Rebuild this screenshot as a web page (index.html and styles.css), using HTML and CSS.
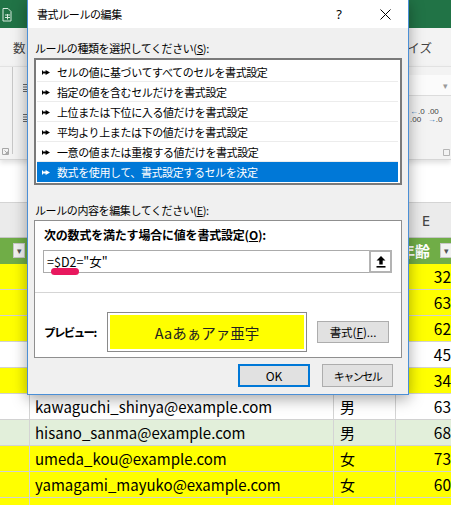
FILE: index.html
```html
<!DOCTYPE html>
<html lang="ja">
<head>
<meta charset="utf-8">
<title>書式ルールの編集</title>
<link rel="stylesheet" href="styles.css">
</head>
<body>
<div class="excel">
  <div class="appbar">
    <svg class="qa-icon" width="10" height="15" viewBox="0 0 10 15">
      <path d="M1 1.5h5l3 3v9.5H1z" fill="none" stroke="#d7eadd" stroke-width="1"/>
      <path d="M3 8h5M3 10.5h5M5.5 7v5.5" stroke="#d7eadd" stroke-width="1"/>
    </svg>
  </div>
  <div class="tabs"><span>数</span><span>サイズ</span></div>
  <div class="ribbon">
    <div class="rb-left">
      <div class="rb-launch-col">
        <svg width="7" height="7" viewBox="0 0 7 7"><path d="M0.5 0.5h6v6h-6z" fill="none" stroke="#a6a6a6"/><path d="M2.5 2.5l3 3M5.5 3.5v2h-2" fill="none" stroke="#a6a6a6"/></svg>
      </div>
      <div class="rb-sep"></div>
      <div class="rb-align">
        <svg width="6" height="8" viewBox="0 0 6 8"><path d="M0 0.5h6M0 3h6M0 5.5h6M0 7.5h6" stroke="#6a6a6a"/></svg>
        <svg width="6" height="8" viewBox="0 0 6 8"><path d="M0 0.5h6M0 3h6M0 5.5h6M0 7.5h6" stroke="#6a6a6a"/></svg>
      </div>
    </div>
    <div class="rb-right">
      <div class="rb-combo"><span class="rb-caret">▾</span></div>
      <div class="rb-dec">
        <div class="dec"><span><b class="arr">←</b>.0</span><span>.00</span></div>
        <div class="dec"><span>.00</span><span><b class="arr">→</b>.0</span></div>
      </div>
      <div class="rb-launch2">
        <svg width="7" height="7" viewBox="0 0 7 7"><path d="M0.5 0.5h6v6h-6z" fill="none" stroke="#b5b5b5"/></svg>
      </div>
    </div>
  </div>
  <div class="formulabar"></div>
  <div class="colhead">
    <div class="ch"></div><div class="ch"></div><div class="ch"></div><div class="ch">E</div>
  </div>
  <div class="sheet">
    <div class="row head">
      <div class="c c1"><span class="dd">▾</span></div>
      <div class="c c2"></div>
      <div class="c c3"></div>
      <div class="c c4"><span>年齢</span><span class="dd">▾</span></div>
    </div>
    <div class="row yel"><div class="c c1"></div><div class="c c2"></div><div class="c c3"></div><div class="c c4">32</div></div>
    <div class="row yel"><div class="c c1"></div><div class="c c2"></div><div class="c c3"></div><div class="c c4">63</div></div>
    <div class="row yel"><div class="c c1"></div><div class="c c2"></div><div class="c c3"></div><div class="c c4">62</div></div>
    <div class="row wht"><div class="c c1"></div><div class="c c2"></div><div class="c c3"></div><div class="c c4">45</div></div>
    <div class="row yel"><div class="c c1"></div><div class="c c2"></div><div class="c c3"></div><div class="c c4">34</div></div>
    <div class="row wht"><div class="c c1"></div><div class="c c2">kawaguchi_shinya@example.com</div><div class="c c3">男</div><div class="c c4">63</div></div>
    <div class="row grn"><div class="c c1"></div><div class="c c2">hisano_sanma@example.com</div><div class="c c3">男</div><div class="c c4">68</div></div>
    <div class="row yel"><div class="c c1"></div><div class="c c2">umeda_kou@example.com</div><div class="c c3">女</div><div class="c c4">73</div></div>
    <div class="row yel"><div class="c c1"></div><div class="c c2">yamagami_mayuko@example.com</div><div class="c c3">女</div><div class="c c4">60</div></div>
    <div class="row yel"><div class="c c1"></div><div class="c c2"></div><div class="c c3"></div><div class="c c4"></div></div>
  </div>
</div>

<div class="dialog">
  <div class="dlg-title">
    <span class="dlg-caption">書式ルールの編集</span>
    <span class="dlg-help">?</span>
    <span class="dlg-close"><svg width="11" height="11" viewBox="0 0 11 11"><path d="M0.5 0.5l10 10M10.5 0.5l-10 10" stroke="#000" stroke-width="1"/></svg></span>
  </div>
  <div class="dlg-body">
    <div class="lbl">ルールの種類を選択してください(<u>S</u>):</div>
    <ul class="rules">
      <li><svg class="mk" viewBox="0 0 8 5"><path d="M0 0.5h1v4H0z M0 1.6h4.5v1.8H0z M3.6 0L8 2.5L3.6 5z" fill="currentColor"/></svg>セルの値に基づいてすべてのセルを書式設定</li>
      <li><svg class="mk" viewBox="0 0 8 5"><path d="M0 0.5h1v4H0z M0 1.6h4.5v1.8H0z M3.6 0L8 2.5L3.6 5z" fill="currentColor"/></svg>指定の値を含むセルだけを書式設定</li>
      <li><svg class="mk" viewBox="0 0 8 5"><path d="M0 0.5h1v4H0z M0 1.6h4.5v1.8H0z M3.6 0L8 2.5L3.6 5z" fill="currentColor"/></svg>上位または下位に入る値だけを書式設定</li>
      <li><svg class="mk" viewBox="0 0 8 5"><path d="M0 0.5h1v4H0z M0 1.6h4.5v1.8H0z M3.6 0L8 2.5L3.6 5z" fill="currentColor"/></svg>平均より上または下の値だけを書式設定</li>
      <li><svg class="mk" viewBox="0 0 8 5"><path d="M0 0.5h1v4H0z M0 1.6h4.5v1.8H0z M3.6 0L8 2.5L3.6 5z" fill="currentColor"/></svg>一意の値または重複する値だけを書式設定</li>
      <li class="sel"><svg class="mk" viewBox="0 0 8 5"><path d="M0 0.5h1v4H0z M0 1.6h4.5v1.8H0z M3.6 0L8 2.5L3.6 5z" fill="currentColor"/></svg>数式を使用して、書式設定するセルを決定</li>
    </ul>
    <div class="lbl lbl2">ルールの内容を編集してください(<u>E</u>):</div>
    <div class="rulebox">
      <div class="rbx-top">
        <div class="blbl">次の数式を満たす場合に値を書式設定(<u>O</u>):</div>
        <div class="fx">
          <span class="fx-text">=$D2="女"</span>
          <span class="fx-mark"></span>
          <span class="fx-btn"><svg width="10" height="12" viewBox="0 0 10 12"><path d="M5 0L9.5 4.6H6.7V8.5H3.3V4.6H0.5z" fill="#000"/><path d="M0.5 10h9v1.6h-9z" fill="#000"/></svg></span>
        </div>
      </div>
      <div class="rbx-bottom">
        <span class="pv-lbl">プレビュー:</span>
        <div class="pv-box"><div class="pv-inner">Aaあぁアァ亜宇</div></div>
        <button class="btn fmt">書式(<u>F</u>)...</button>
      </div>
    </div>
    <div class="actions">
      <button class="btn ok">OK</button>
      <button class="btn cancel">キャンセル</button>
    </div>
  </div>
</div>
</body>
</html>
```

FILE: styles.css
```css
* { box-sizing: border-box; }
html, body { margin: 0; padding: 0; }
body {
  width: 451px;
  height: 505px;
  overflow: hidden;
  position: relative;
  background: #fff;
  color: #000;
  font-family: "Noto Sans CJK JP", "Noto Sans", sans-serif;
}

/* ---------- Excel background ---------- */
.appbar { height: 28px; background: #217346; padding: 7px 0 0 2px; }
.qa-icon { display: block; }

.tabs {
  height: 38px;
  background: #f3f3f3;
  display: flex;
  justify-content: space-between;
  align-items: center;
  padding: 0 19px 0 13px;
  font-size: 12.5px;
  color: #444;
}

.ribbon {
  height: 94px;
  background: #f3f3f3;
  border-top: 1px solid #e2e2e2;
  border-bottom: 1px solid #d6d6d6;
  display: flex;
  justify-content: space-between;
  box-shadow: 0 3px 5px rgba(0, 0, 0, 0.12);
  position: relative;
  z-index: 1;
}
.rb-left { width: 30px; display: flex; }
.rb-launch-col { width: 12px; display: flex; align-items: flex-end; padding: 0 0 4px 2px; }
.rb-launch-col svg { display: block; }
.rb-sep { width: 1px; background: #c8c8c8; margin-bottom: 5px; }
.rb-align { display: flex; flex-direction: column; gap: 22px; padding: 17px 0 0 10px; }
.rb-align svg { display: block; }

.rb-right { width: 46px; display: flex; flex-direction: column; padding-top: 8px; }
.rb-combo {
  height: 21px;
  background: #fbfbfb;
  border-bottom: 1px solid #dcdcdc;
  display: flex;
  justify-content: flex-end;
  align-items: center;
  padding-right: 3px;
  font-size: 9px;
  color: #9a9a9a;
}
.rb-dec { display: flex; gap: 3px; margin-top: 12px; padding-left: 5px; }
.dec { display: flex; flex-direction: column; font-size: 8px; line-height: 8px; color: #444; font-family: "Liberation Sans", sans-serif; }
.dec .arr { color: #2e75b6; font-weight: normal; }
.rb-launch2 { margin-top: auto; padding: 0 0 3px 38px; }
.rb-launch2 svg { display: block; }

.formulabar { height: 42px; background: #fff; }

.colhead {
  height: 36px;
  background: #ebebeb;
  border-top: 1px solid #d4d4d4;
  border-bottom: 1px solid #c6c6c6;
  display: grid;
  grid-template-columns: 30px 304px 62px 61px;
}
.ch {
  border-right: 1px solid #d0d0d0;
  display: flex;
  align-items: center;
  justify-content: center;
  font-size: 15px;
  color: #444;
  font-family: "Noto Sans", sans-serif;
}

.sheet { width: 457px; }
.row {
  height: 26px;
  display: grid;
  grid-template-columns: 30px 304px 62px 61px;
}
.c {
  border-right: 1px solid #d4d4d4;
  border-bottom: 1px solid #d2d2d2;
  line-height: 25px;
  font-size: 15px;
  white-space: nowrap;
  overflow: hidden;
}
.c2 { padding-left: 5px; }
.c3 { padding-left: 6px; }
.c4 { text-align: right; padding-right: 5px; font-size: 15.5px; }
.yel .c { background: #ffff00; }
.wht .c { background: #fff; }
.grn .c { background: #e2efda; }

.head .c {
  background: #70ad47;
  color: #fff;
  font-weight: bold;
  border-bottom: 1px solid #70ad47;
  border-right-color: #70ad47;
  display: flex;
  align-items: center;
  justify-content: flex-end;
}
.head .c4 { justify-content: space-between; padding: 0 4px 0 4px; font-size: 15px; }
.head .c1 { padding-right: 4px; }
.dd {
  width: 12px;
  height: 15px;
  background: #f2f2f2;
  border: 1px solid #c8c8c8;
  color: #555;
  font-size: 9px;
  line-height: 13px;
  text-align: center;
  font-weight: normal;
}

/* ---------- Dialog ---------- */
.dialog {
  position: absolute;
  left: 27px;
  top: -1px;
  z-index: 10;
  width: 382px;
  height: 396px;
  border: 1px solid #4b8fd6;
  background: #f0f0f0;
  box-shadow: 0 4px 14px rgba(0, 0, 0, 0.35);
  font-size: 11px;
  letter-spacing: -0.4px;
  color: #000;
}
.dlg-title { height: 28px; background: #fff; display: flex; align-items: center; }
.dlg-caption { flex: 1; padding-left: 9px; }
.dlg-help, .dlg-close {
  width: 46px;
  height: 28px;
  display: flex;
  align-items: center;
  justify-content: center;
}
.dlg-help { font-size: 13px; letter-spacing: 0; font-family: "Noto Sans", sans-serif; }
.dlg-close svg { display: block; }

.dlg-body { padding: 12px 6px 0; }
.lbl { line-height: 16px; padding-left: 1px; }
.lbl2 { margin-top: 17px; margin-bottom: 2px; }

.rules {
  list-style: none;
  margin: 2px 0 0;
  padding: 2px 2px 1px 1px;
  border: 2px solid #7a7a7a;
  background: #fff;
}
.rules li {
  height: 20px;
  display: flex;
  align-items: center;
  padding-left: 5px;
  border-bottom: 1px solid #ececec;
  white-space: nowrap;
}
.rules li.sel { background: #0078d7; color: #fff; border-bottom-color: #0078d7; }
.mk { width: 8px; height: 5px; margin: 1px 7px 0 0; flex: none; }

.rulebox { background: #fff; border: 1px solid #8f8f8f; }
.rbx-top { padding: 6px 9px 19px 8px; border-bottom: 1px solid #d5d5d5; }
.blbl { font-weight: bold; font-size: 12px; letter-spacing: -0.2px; line-height: 16px; padding-left: 1px; }
.fx {
  margin-top: 7px;
  height: 23px;
  border: 1px solid #ababab;
  display: flex;
  align-items: center;
  position: relative;
}
.fx-text { flex: 1; padding-left: 3px; font-size: 12.5px; letter-spacing: 0; }
.fx-mark {
  position: absolute;
  left: 7px;
  top: 17px;
  width: 28px;
  height: 7px;
  border-radius: 4px;
  background: #e8185e;
}
.fx-btn {
  width: 23px;
  height: 23px;
  margin: -1px -1px -1px 0;
  border: 2px solid #b3b3b3;
  background: #fff;
  display: flex;
  align-items: center;
  justify-content: center;
}
.fx-btn svg { display: block; }

.rbx-bottom { display: flex; align-items: center; padding: 19px 0 5px 9px; }
.pv-lbl { width: 63px; font-weight: bold; font-size: 11.5px; letter-spacing: -1.6px; }
.pv-box { width: 200px; height: 40px; border: 1px solid #8a8a8a; padding: 2px; background: #fff; }
.pv-inner {
  height: 100%;
  background: #ffff00;
  display: flex;
  align-items: center;
  justify-content: center;
  font-size: 14.5px;
  letter-spacing: 0;
  color: #222;
}

.btn {
  font-family: inherit;
  font-size: 11.5px;
  letter-spacing: 0;
  height: 22px;
  width: 72px;
  padding: 0;
  background: #e1e1e1;
  border: 1px solid #adadad;
  color: #000;
}
.fmt { margin-left: 10px; }
.actions { display: flex; justify-content: flex-end; gap: 12px; margin-top: 6px; padding-right: 9px; }
.actions .btn { height: 23px; }
.ok { border: 2px solid #0078d7; font-size: 12px; }
.cancel { width: 71px; font-size: 11px; letter-spacing: -1.5px; }
```
